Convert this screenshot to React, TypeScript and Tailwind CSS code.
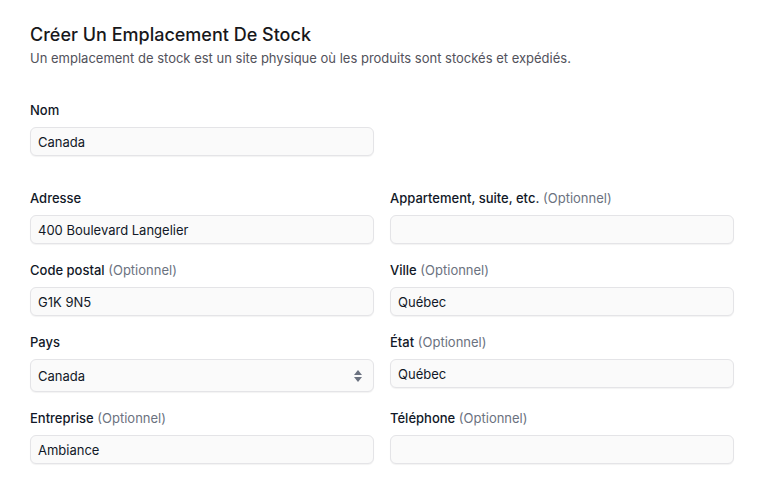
import React from "react";

const font = { fontFamily: "Inter, 'Noto Sans', sans-serif" };

function Label({ text, optional }: { text: string; optional?: boolean }) {
  return (
    <label className="block text-[13px] leading-[20px] font-medium text-[#111827]">
      {text}
      {optional && <span className="font-normal text-[#6b7280]"> (Optionnel)</span>}
    </label>
  );
}

function Field({ label, value, optional }: { label: string; value?: string; optional?: boolean }) {
  return (
    <div className="flex flex-col gap-[7px]">
      <Label text={label} optional={optional} />
      <div className="h-[29px] flex items-center pl-[7px] pt-[3px] rounded-md bg-[#fafafa] border border-[#e4e4e7] shadow-[0_1px_1px_rgba(0,0,0,0.05)] text-[13px] text-[#111827]">
        {value}
      </div>
    </div>
  );
}

function SelectField({ label, value }: { label: string; value: string }) {
  return (
    <div className="flex flex-col gap-[7px]">
      <Label text={label} />
      <div className="h-[33px] flex items-center justify-between pl-[7px] pr-[10px] pt-[3px] rounded-md bg-[#fafafa] border border-[#e4e4e7] shadow-[0_1px_1px_rgba(0,0,0,0.05)] text-[13px] text-[#111827]">
        <span>{value}</span>
        <svg width="10" height="16" viewBox="0 0 10 16" className="text-[#6b7280] -mt-[3px]">
          <path d="M5 2 L9 7 H1 Z" fill="currentColor" />
          <path d="M5 14 L9 9 H1 Z" fill="currentColor" />
        </svg>
      </div>
    </div>
  );
}

export default function App() {
  return (
    <div style={font} className="min-h-screen bg-white px-[30px] pt-[22px]">
      <div className="w-[704px]">
        <h1 className="text-[18px] leading-[26px] font-medium text-[#18181b]">
          Créer Un Emplacement De Stock
        </h1>
        <p className="text-[13px] leading-[20px] text-[#52525b]">
          Un emplacement de stock est un site physique où les produits sont stockés et expédiés.
        </p>

        <div className="grid grid-cols-2 gap-x-4 mt-[32px]">
          <Field label="Nom" value="Canada" />
        </div>

        <div className="grid grid-cols-2 gap-x-4 gap-y-4 items-start mt-[32px]">
          <Field label="Adresse" value="400 Boulevard Langelier" />
          <Field label="Appartement, suite, etc." optional />
          <Field label="Code postal" value="G1K 9N5" optional />
          <Field label="Ville" value="Québec" optional />
          <SelectField label="Pays" value="Canada" />
          <Field label="État" value="Québec" optional />
          <Field label="Entreprise" value="Ambiance" optional />
          <Field label="Téléphone" optional />
        </div>
      </div>
    </div>
  );
}
